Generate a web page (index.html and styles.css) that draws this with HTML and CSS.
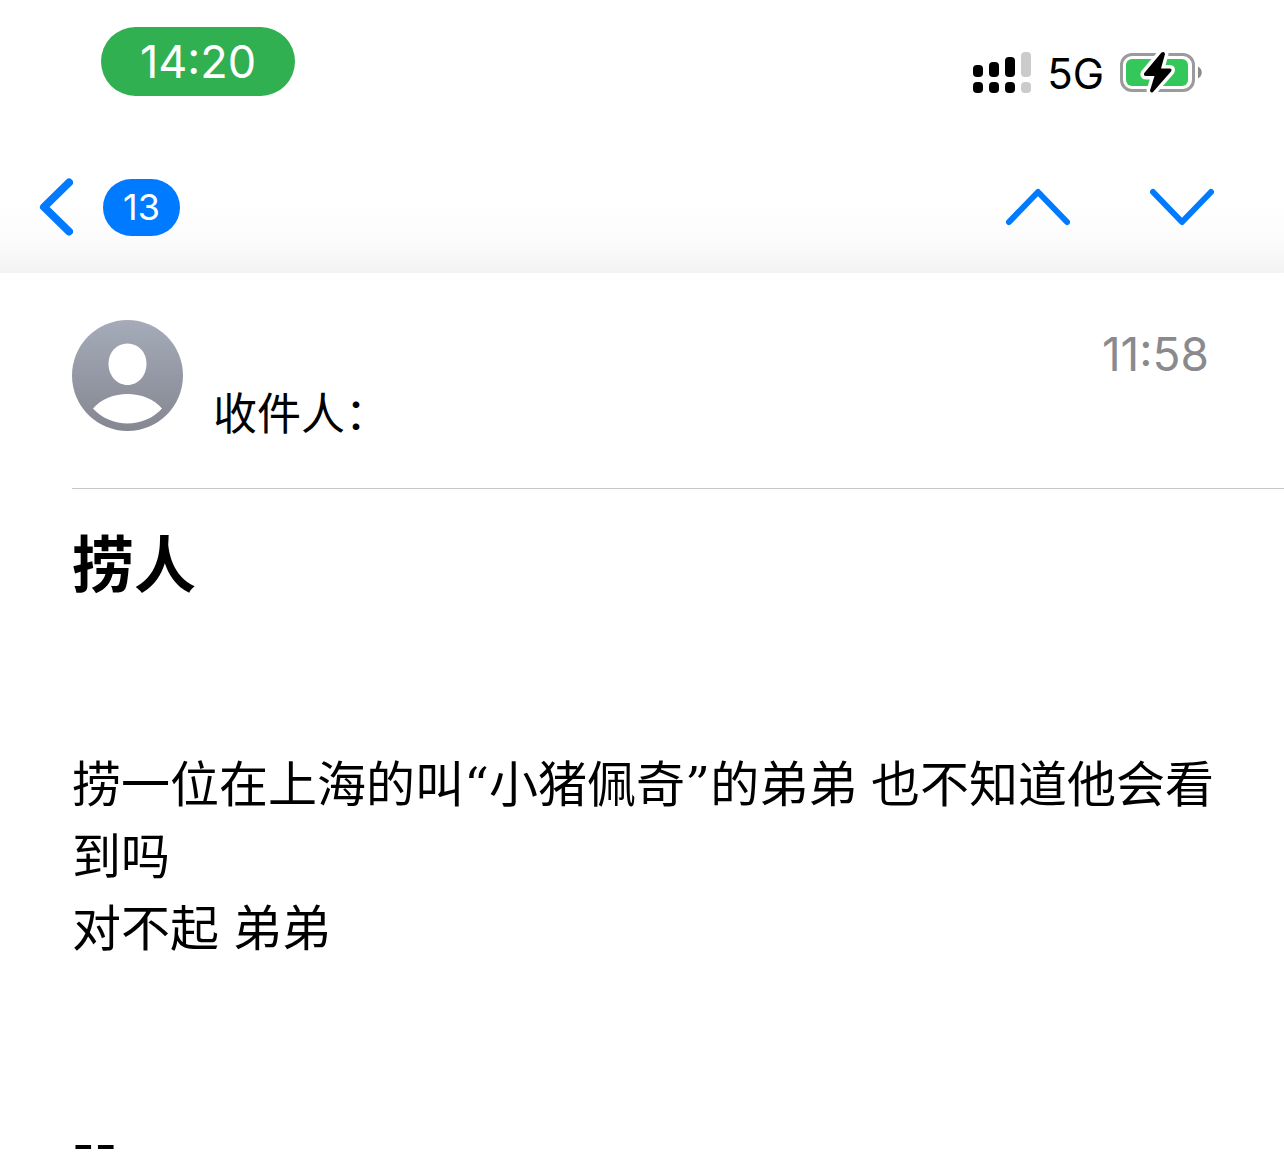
FILE: index.html
```html
<!DOCTYPE html>
<html lang="zh-CN">
<head>
<meta charset="utf-8">
<meta name="viewport" content="width=device-width, initial-scale=1">
<title>捞人</title>
<link rel="stylesheet" href="styles.css">
</head>
<body>
<header class="top">
  <div class="status">
    <time class="clock">14:20</time>
    <div class="indicators">
      <svg class="signal" width="58" height="41" viewBox="0 0 58 41" aria-hidden="true">
        <rect x="0" y="13" width="10" height="12" rx="4"/>
        <rect x="16" y="10" width="10" height="15" rx="4"/>
        <rect x="32" y="5" width="10" height="20" rx="4"/>
        <rect x="0" y="30" width="10" height="11" rx="4"/>
        <rect x="16" y="30" width="10" height="11" rx="4"/>
        <rect x="32" y="30" width="10" height="11" rx="4"/>
        <rect class="off" x="48" y="0" width="10" height="25" rx="4"/>
        <rect class="off" x="48" y="30" width="10" height="11" rx="4"/>
      </svg>
      <span class="network">5G</span>
      <svg class="battery" width="82" height="44" viewBox="0 0 82 44" aria-hidden="true">
        <rect x="1.5" y="4.5" width="72" height="36" rx="10.500" fill="none" stroke="#9b9b9b" stroke-width="3"/>
        <path d="M78 16.500C83 19 83 26 78 28.500Z" fill="#8b8b8b"/>
        <rect x="6" y="9" width="62" height="27" rx="6" fill="#34c759"/>
        <path d="M41.500 2.500L24.300 23Q23 26 26 26H34.500L30 40.500Q30.500 43.500 33 42L51 21.500Q52.500 18.500 49.500 18.500H41L45 4Q44.500 1 41.500 2.500Z" fill="#000" stroke="#fff" stroke-width="7" stroke-linejoin="round" paint-order="stroke"/>
      </svg>
    </div>
  </div>
  <nav class="nav">
    <button class="back" type="button" aria-label="返回">
      <svg width="34" height="58" viewBox="0 0 34 58" aria-hidden="true"><path d="M30 4.500L5 29L30 53.500"/></svg>
      <span class="count">13</span>
    </button>
    <div class="pager">
      <button type="button" aria-label="上一封">
        <svg width="64" height="38" viewBox="0 0 64 38" aria-hidden="true"><path d="M3 34L32 4L61 34"/></svg>
      </button>
      <button type="button" aria-label="下一封">
        <svg width="64" height="38" viewBox="0 0 64 38" aria-hidden="true"><path d="M3 4L32 34L61 4"/></svg>
      </button>
    </div>
  </nav>
</header>
<main class="mail">
  <section class="sender">
    <svg class="avatar" width="111" height="111" viewBox="0 0 111 111" aria-hidden="true">
      <defs><linearGradient id="shade" x1="0" y1="0" x2="0" y2="1"><stop offset="0" stop-color="#a5abb9"/><stop offset="1" stop-color="#858791"/></linearGradient></defs>
      <circle cx="55.500" cy="55.500" r="55.500" fill="url(#shade)"/>
      <path d="M55.500 23.500C66 23.500 74.500 32 74.500 43.500C74.500 56 66 65 55.500 65C45 65 36.500 56 36.500 43.500C36.500 32 45 23.500 55.500 23.500Z" fill="#fff"/>
      <path d="M21 88.500C29 79 42 74 55.500 74S82 79 90 88.500C82 98 68 103.500 55.500 103.500S29 98 21 88.500Z" fill="#fff"/>
    </svg>
    <p class="to">收件人：</p>
    <time class="sent">11:58</time>
  </section>
  <h1 class="subject">捞人</h1>
  <div class="body">
    <p>捞一位在上海的叫<span class="quote">“</span>小猪佩奇<span class="quote">”</span>的弟弟 也不知道他会看到吗</p>
    <p>对不起 弟弟</p>
    <p class="signature">--</p>
  </div>
</main>
</body>
</html>
```
FILE: styles.css
```css
* {
  box-sizing: border-box;
}

body {
  margin: 0;
  background: #fff;
  color: #000;
  font-family: Inter, "Noto Sans CJK SC", sans-serif;
}

p,
h1 {
  margin: 0;
}

button {
  display: flex;
  align-items: center;
  padding: 0;
  border: 0;
  background: none;
  color: #007aff;
  font: inherit;
}

button path {
  fill: none;
  stroke: currentColor;
  stroke-width: 6;
  stroke-linecap: round;
  stroke-linejoin: round;
}

.back path {
  stroke-width: 8;
}

.top {
  padding-top: 27px;
  background: linear-gradient(#fff 205px, #fbfbfb 242px, #f3f3f3);
}

.status {
  display: flex;
  justify-content: space-between;
  align-items: flex-start;
  height: 69px;
  padding: 0 82px 0 101px;
}

.clock {
  width: 194px;
  padding-top: 1px;
  border-radius: 35px;
  background: #30b050;
  color: #fff;
  font-size: 45px;
  line-height: 68px;
  text-align: center;
}

.indicators {
  display: flex;
  align-items: center;
  gap: 16px;
  padding-top: 19px;
}

.signal .off {
  fill: #cbcbcb;
}

.network {
  padding-top: 4px;
  font-size: 42px;
  line-height: 48px;
}

.nav {
  display: flex;
  justify-content: space-between;
  align-items: center;
  padding: 82px 70px 37px 39px;
}

.back {
  gap: 30px;
}

.count {
  width: 77px;
  border-radius: 29px;
  background: #007aff;
  color: #fff;
  font-size: 36px;
  line-height: 57px;
  text-align: center;
}

.pager {
  display: flex;
  gap: 80px;
}

.mail {
  padding-left: 72px;
}

.sender {
  display: flex;
  align-items: flex-start;
  gap: 30px;
  padding: 47px 75px 46px 0;
  border-bottom: 1px solid #c6c6c8;
}

.to {
  flex: 1;
  padding-top: 66px;
  font-size: 44px;
  line-height: 56px;
}

.sent {
  padding-top: 8px;
  color: #8a8a8e;
  font-size: 46px;
  line-height: 52px;
}

.subject {
  padding-top: 32px;
  font-size: 62px;
  line-height: 90px;
}

.body {
  padding: 138px 64px 0 0;
  font-size: 49px;
  line-height: 72px;
}

.quote {
  font-family: "DejaVu Serif", serif;
  line-height: 1;
}

.signature {
  padding-top: 152px;
  line-height: 56px;
}
```
